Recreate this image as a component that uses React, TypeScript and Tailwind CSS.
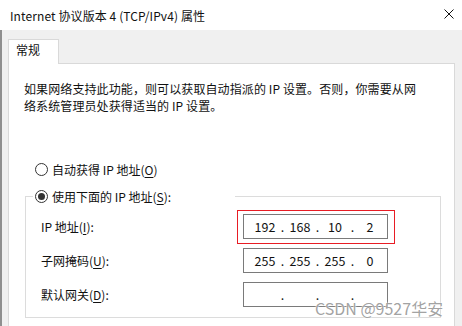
import React from "react";

const U = ({ children }: { children: React.ReactNode }) => (
  <span className="underline underline-offset-2">{children}</span>
);

function Radio({ checked }: { checked?: boolean }) {
  return (
    <span className="w-[13px] h-[13px] rounded-full border border-[#333333] bg-white flex items-center justify-center shrink-0">
      {checked && <span className="w-[7px] h-[7px] rounded-full bg-[#333333]" />}
    </span>
  );
}

function IpBox({ parts }: { parts: string[] }) {
  return (
    <div className="w-[145px] h-[25px] border border-[#7a7a7a] bg-white flex items-center pl-[6px] text-[12.5px] leading-[17px]">
      {parts.map((p, i) => (
        <React.Fragment key={i}>
          {i > 0 && <span className="w-[5px] text-center">.</span>}
          <span className="w-[30px] text-center">{p}</span>
        </React.Fragment>
      ))}
    </div>
  );
}

export default function App() {
  return (
    <div
      className="w-[462px] h-[326px] overflow-hidden flex flex-col text-[#111] relative"
      style={{ fontFamily: '"Noto Sans CJK SC", "Noto Sans", sans-serif' }}
    >
      <div className="h-[30px] bg-white flex items-center justify-between pl-[10px] pr-[8px] shrink-0">
        <span className="text-[12px] leading-[17px] tracking-[0.1px]">Internet 协议版本 4 (TCP/IPv4) 属性</span>
        <svg width="10" height="10" viewBox="0 0 10 10" className="mb-[2px]">
          <path d="M0.5 0.5 L9.5 9.5 M9.5 0.5 L0.5 9.5" stroke="#111" strokeWidth="1" fill="none" />
        </svg>
      </div>
      <div className="flex-1 bg-[#f0f0f0] border-l-2 border-[#8f8f8f] pl-[6px] pr-[7px] pt-[9px] flex flex-col">
        <div className="w-[51px] h-[25px] bg-white border-t border-x border-[#d9d9d9] -mb-px relative z-10 pl-[7px] pt-[1px] text-[12px] leading-[17px]">
          常规
        </div>
        <div className="flex-1 bg-white border border-b-0 border-[#d9d9d9] pl-[15px] pt-[16px]">
          <p className="text-[12px] leading-[17px] tracking-[0.1px]">
            如果网络支持此功能，则可以获取自动指派的 IP 设置。否则，你需要从网
            <br />
            络系统管理员处获得适当的 IP 设置。
          </p>
          <div className="mt-[45px] ml-[11px] h-[20px] flex items-center gap-[4px] text-[12px] leading-[17px]">
            <Radio />
            <span>
              自动获得 IP 地址(<U>O</U>)
            </span>
          </div>
          <fieldset className="mt-[7px] ml-[1px] w-[416px] border border-[#dcdcdc] pl-[7px] pb-[10px]">
            <legend className="w-[202px] h-[20px] flex items-center gap-[4px] text-[12px] leading-[17px] bg-white">
              <span className="ml-[2px]">
                <Radio checked />
              </span>
              <span>
                使用下面的 IP 地址(<U>S</U>):
              </span>
            </legend>
            <div className="ml-[8px] mt-[8px] flex flex-col gap-[9px] text-[12px] leading-[17px]">
              <div className="flex items-center">
                <span className="w-[202px]">
                  IP 地址(<U>I</U>):
                </span>
                <div className="relative">
                  <IpBox parts={["192", "168", "10", "2"]} />
                  <div className="absolute left-[-6px] top-[-4px] w-[158px] h-[34px] border border-[#e81c24] pointer-events-none" />
                </div>
              </div>
              <div className="flex items-center">
                <span className="w-[202px]">
                  子网掩码(<U>U</U>):
                </span>
                <IpBox parts={["255", "255", "255", "0"]} />
              </div>
              <div className="flex items-center">
                <span className="w-[202px]">
                  默认网关(<U>D</U>):
                </span>
                <IpBox parts={["", "", "", ""]} />
              </div>
            </div>
          </fieldset>
        </div>
      </div>
      <div
        className="absolute left-[315px] top-[297px] text-[16px] leading-[22px] text-[#8a8a8a]/80"
        style={{ textShadow: "0 0 2px #fff, 0 0 1px #fff" }}
      >
        CSDN @9527华安
      </div>
    </div>
  );
}
